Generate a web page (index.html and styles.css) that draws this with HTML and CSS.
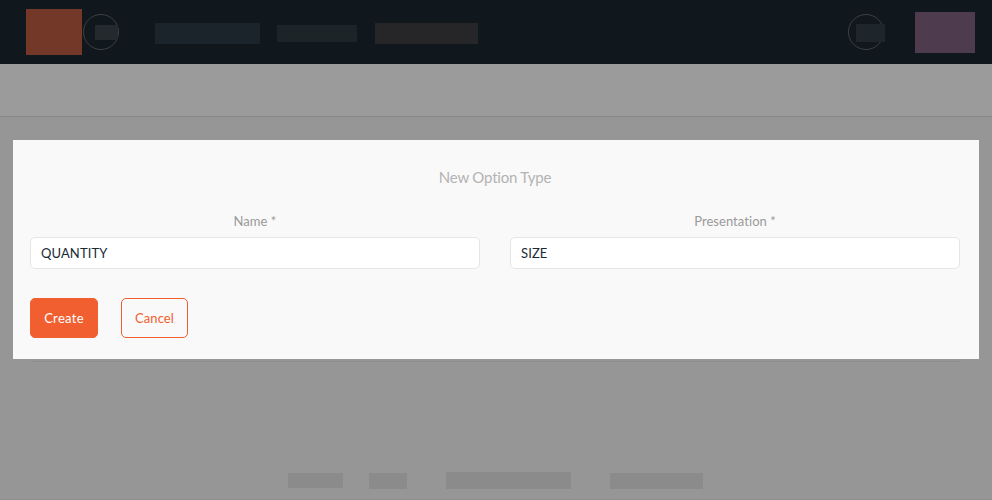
FILE: index.html
```html
<!DOCTYPE html>
<html lang="en">
<head>
<meta charset="utf-8">
<title>New Option Type</title>
<link rel="stylesheet" href="styles.css">
</head>
<body>
<header class="topbar">
  <div class="logo"></div>
  <div class="circle circle-start"><span class="circle-label"></span></div>
  <nav class="nav">
    <span class="nav-item nav-first"></span>
    <span class="nav-item nav-second"></span>
    <span class="nav-item nav-third"></span>
  </nav>
  <div class="circle circle-end"><span class="circle-label"></span></div>
  <div class="account"></div>
</header>
<div class="subbar"></div>
<main class="content">
  <form class="modal">
    <h1 class="title">New Option Type</h1>
    <div class="fields">
      <div class="field">
        <label class="label" for="name">Name *</label>
        <input class="input" id="name" type="text" value="QUANTITY">
      </div>
      <div class="field">
        <label class="label" for="presentation">Presentation *</label>
        <input class="input" id="presentation" type="text" value="SIZE">
      </div>
    </div>
    <div class="actions">
      <button class="button create" type="button">Create</button>
      <button class="button cancel" type="button">Cancel</button>
    </div>
  </form>
  <div class="rule"></div>
</main>
<footer class="footer">
  <span class="link link-a"></span>
  <span class="link link-b"></span>
  <span class="link link-c"></span>
  <span class="link link-d"></span>
</footer>
</body>
</html>
```
FILE: styles.css
```css
* {
  box-sizing: border-box;
}

body {
  margin: 0;
  height: 500px;
  overflow: hidden;
  display: flex;
  flex-direction: column;
  background: #969696;
  font-family: Lato, "Liberation Sans", sans-serif;
  font-size: 14px;
  font-variant-ligatures: none;
}

.topbar {
  height: 64px;
  flex: none;
  display: flex;
  align-items: flex-start;
  padding: 0 17px 0 26px;
  background: #10181d;
}

.logo {
  width: 56px;
  height: 46px;
  margin-top: 9px;
  background: #733828;
}

.circle {
  position: relative;
  width: 36px;
  height: 36px;
  margin-top: 14px;
  border: 1px solid #3d4042;
  border-radius: 50%;
}

.circle-start {
  margin-left: 1px;
}

.circle-end {
  margin-left: auto;
}

.circle-label {
  position: absolute;
}

.circle-start .circle-label {
  left: 11px;
  top: 10px;
  width: 23px;
  height: 15px;
  background: #23292c;
}

.circle-end .circle-label {
  left: 7px;
  top: 9px;
  width: 29px;
  height: 18px;
  background: #1e262b;
}

.nav {
  display: flex;
  align-items: center;
  height: 21px;
  margin: 23px 0 0 36px;
}

.nav-item {
  height: 21px;
}

.nav-first {
  width: 105px;
  background: #1c242b;
}

.nav-second {
  width: 80px;
  height: 17px;
  margin: 0 18px 0 17px;
  background: #1c2427;
}

.nav-third {
  width: 103px;
  background: #262629;
}

.account {
  width: 60px;
  height: 41px;
  margin: 12px 0 0 31px;
  background: #4f3b4e;
}

.subbar {
  height: 53px;
  flex: none;
  background: #9b9b9b;
  border-bottom: 1px solid #868686;
}

.content {
  height: 355px;
  flex: none;
  padding: 23px 13px 0;
}

.modal {
  height: 219px;
  padding: 27px 19px 0 17px;
  background: #f9f9f9;
}

.title {
  margin: 0;
  font-size: 15px;
  line-height: 20px;
  font-weight: 400;
  letter-spacing: -0.2px;
  text-align: center;
  color: #b3b3b3;
}

.fields {
  display: grid;
  grid-template-columns: 1fr 1fr;
  gap: 30px;
  margin-top: 25px;
}

.field {
  display: flex;
  flex-direction: column;
}

.label {
  height: 25px;
  font-size: 13px;
  line-height: 18px;
  letter-spacing: 0.05px;
  text-align: center;
  color: #999;
}

.input {
  width: 100%;
  height: 32px;
  padding: 0 10px;
  border: 1px solid #e6e6e6;
  border-radius: 5px;
  background: #fff;
  font: 13px Lato, "Liberation Sans", sans-serif;
  letter-spacing: 0.1px;
  color: #192a35;
}

.actions {
  display: flex;
  gap: 23px;
  margin-top: 29px;
}

.button {
  height: 40px;
  padding: 0;
  border: 1px solid #f15e2f;
  border-radius: 5px;
  font: 13px Lato, "Liberation Sans", sans-serif;
}

.create {
  width: 68px;
  background: #f15e2f;
  letter-spacing: 0.3px;
  color: #fff;
}

.cancel {
  width: 67px;
  background: #f9f9f9;
  letter-spacing: 0.1px;
  color: #f15e2f;
}

.rule {
  height: 1px;
  margin: 2px 18px 0;
  background: #8c8c8c;
}

.footer {
  height: 28px;
  flex: none;
  display: flex;
  align-items: flex-start;
  padding-left: 288px;
  border-bottom: 1px solid #8f8f8f;
}

.link {
  height: 16px;
  margin-top: 1px;
  background: #8b8b8b;
}

.link-a {
  width: 55px;
  height: 15px;
}

.link-b {
  width: 38px;
  margin-left: 26px;
}

.link-c {
  width: 125px;
  height: 17px;
  margin: 0 39px;
}

.link-d {
  width: 93px;
}
```
